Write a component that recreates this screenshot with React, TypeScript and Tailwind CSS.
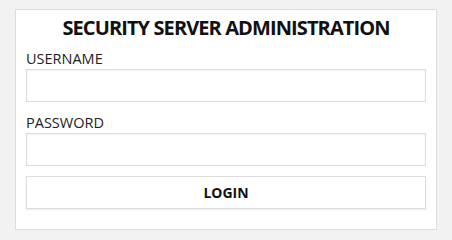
export default function App() {
  return (
    <div className="min-h-screen bg-[#f2f2f2] px-[15px] pt-[9px] font-['Open_Sans',sans-serif]">
      <div className="border border-[#dddddd] bg-white px-[10px] pb-[20px] pt-[4px]">
        <h1 className="text-center text-[20px] font-bold leading-[28px] tracking-[-0.9px] text-[#111111]">
          SECURITY SERVER ADMINISTRATION
        </h1>
        <label className="mt-[7px] block text-[14.5px] leading-[20px] text-[#222222]">USERNAME</label>
        <input
          type="text"
          className="block h-[33px] w-full border border-[#dddddd] bg-white px-2 text-[14px] shadow-[inset_0_1px_2px_rgba(0,0,0,0.06)] outline-none"
        />
        <label className="mt-[11px] block text-[14.5px] leading-[20px] text-[#222222]">PASSWORD</label>
        <input
          type="password"
          className="block h-[33px] w-full border border-[#dddddd] bg-white px-2 text-[14px] shadow-[inset_0_1px_2px_rgba(0,0,0,0.06)] outline-none"
        />
        <button className="mt-[10px] block h-[33px] w-full border border-[#dddddd] bg-white text-[14px] font-bold text-[#111111] shadow-[0_1px_2px_rgba(0,0,0,0.08)]">
          LOGIN
        </button>
      </div>
    </div>
  );
}
